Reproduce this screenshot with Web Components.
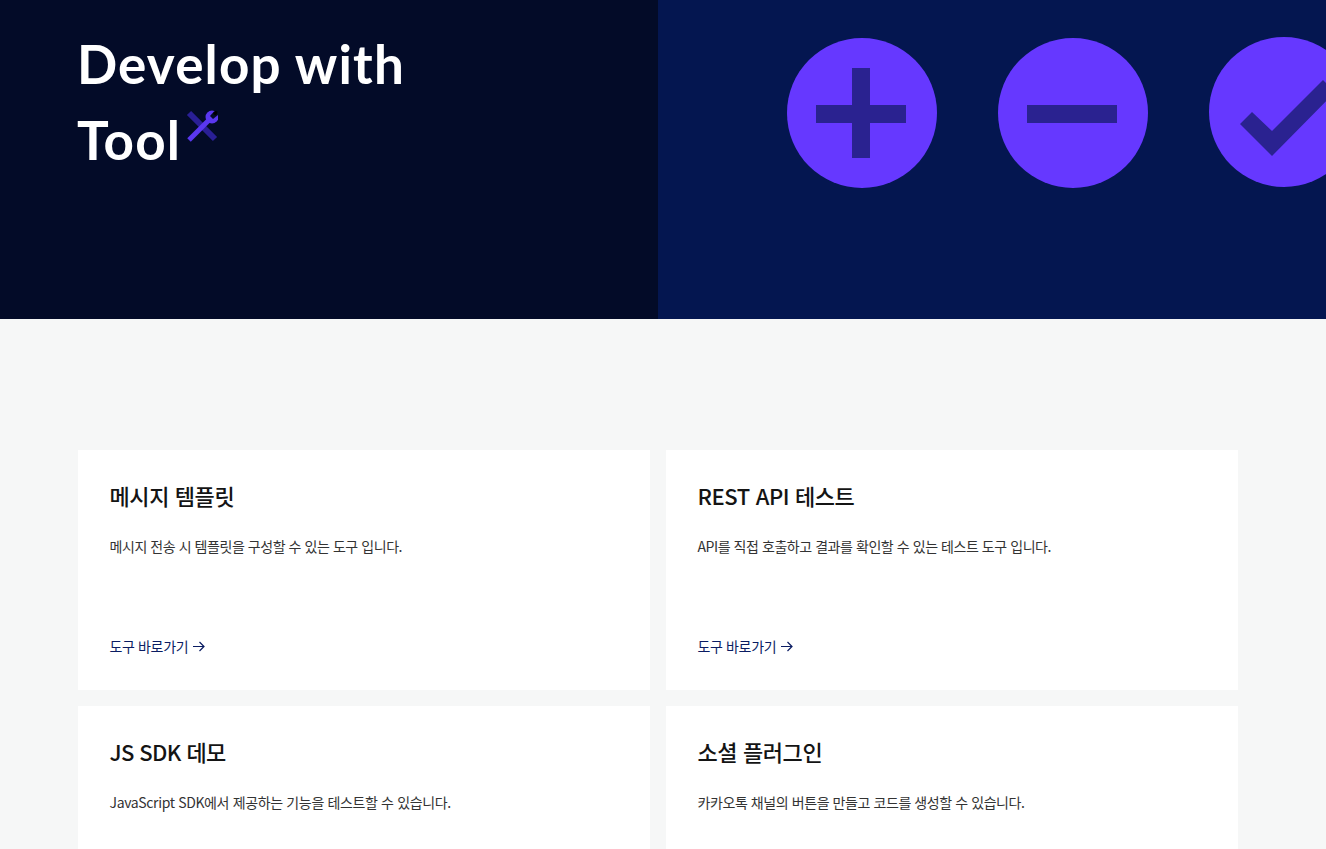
<!DOCTYPE html>
<html lang="ko"><head><meta charset="utf-8"><title>Develop with Tool</title>
<style>
html,body{margin:0;padding:0;height:849px;overflow:hidden;background:#f6f7f7;font-family:"Noto Sans CJK KR","Noto Sans",sans-serif}
</style></head><body>
<tool-page>
<tool-hero></tool-hero>
<card-grid>
<tool-card heading="메시지 템플릿" desc="메시지 전송 시 템플릿을 구성할 수 있는 도구 입니다." link="도구 바로가기"></tool-card>
<tool-card heading="REST API 테스트" desc="API를 직접 호출하고 결과를 확인할 수 있는 테스트 도구 입니다." link="도구 바로가기"></tool-card>
<tool-card heading="JS SDK 데모" desc="JavaScript SDK에서 제공하는 기능을 테스트할 수 있습니다." style="--ds:-.36px;--hs:-.6px"></tool-card>
<tool-card heading="소셜 플러그인" desc="카카오톡 채널의 버튼을 만들고 코드를 생성할 수 있습니다." style="--ds:-.42px"></tool-card>
</card-grid>
</tool-page>
<script>
class ToolPage extends HTMLElement{constructor(){super();this.attachShadow({mode:'open'}).innerHTML=`<style>:host{display:block;height:849px;overflow:hidden}</style><slot></slot>`}}
class ToolHero extends HTMLElement{constructor(){super();this.attachShadow({mode:'open'}).innerHTML=`<style>
:host{display:flex;height:319px;overflow:hidden}
.l{flex:0 0 658px;background:#030b28;box-sizing:border-box;padding:26px 0 0 77px}
h1{margin:0;font:700 53px/76px Lato,sans-serif;color:#fff;letter-spacing:1.15px}
.tool{display:flex;align-items:flex-start}
.tool svg{margin:8px 0 0 5px;flex:none}
.r{flex:1;min-width:0;background:#041650;display:flex;gap:61px;padding:38px 0 0 129px;align-items:flex-start;overflow:hidden}
.r svg{flex:none}
.r svg:last-child{margin-top:-1px}
</style>
<div class="l"><h1>Develop with<div class="tool">Tool<svg width="32" height="32" viewBox="0 0 32 32"><path d="M3 3 29 29" stroke="#2a1f96" stroke-width="6" fill="none"/><path d="M3 30 23 10" stroke="#5a37f0" stroke-width="5" fill="none"/><circle cx="26" cy="7" r="6.500" fill="#5a37f0"/><path d="M24 6 28 1.500 32 1 32 5 27 9Z" fill="#030b28"/><path d="M27 3.500 29 1 31.500 1.500 31 4 29 5.500Z" fill="#000"/></svg></div></h1></div>
<div class="r">
<svg width="150" height="150" viewBox="0 0 150 150"><circle cx="75" cy="75" r="75" fill="#6638ff"/><path d="M65 30H83V67H119V85H83V120H65V85H29V67H65Z" fill="#2a2290"/></svg>
<svg width="150" height="150" viewBox="0 0 150 150"><circle cx="75" cy="75" r="75" fill="#6638ff"/><path d="M29 67H119V85H29Z" fill="#2a2290"/></svg>
<svg width="150" height="150" viewBox="0 0 150 150"><circle cx="75" cy="75" r="75" fill="#6638ff"/><path d="M31 87 43 75 63 94 114 43 126 55 63 119Z" fill="#2a2290"/></svg>
</div>`}}
class CardGrid extends HTMLElement{constructor(){super();this.attachShadow({mode:'open'}).innerHTML=`<style>:host{display:grid;grid-template-columns:572px 572px;gap:16px;padding:131px 0 0 78px}</style><slot></slot>`}}
class ToolCard extends HTMLElement{constructor(){super();const l=this.getAttribute('link');this.attachShadow({mode:'open'}).innerHTML=`<style>
:host{display:flex;flex-direction:column;box-sizing:border-box;height:240px;background:#fff;padding:28px 32px 33px 31.5px}
h2{margin:0;font:500 22px/34px "Noto Sans CJK KR",sans-serif;color:#141414;letter-spacing:var(--hs,-.4px)}
p{margin:23px 0 0;font:400 14px/22px "Noto Sans CJK KR",sans-serif;color:#333;letter-spacing:var(--ds,-.44px)}
a{margin-top:auto;display:flex;align-items:center;gap:5px;font:400 14px/22px "Noto Sans CJK KR",sans-serif;color:#0a1c62;letter-spacing:-.36px;text-decoration:none}
svg{display:block}
</style><h2>${this.getAttribute('heading')}</h2><p>${this.getAttribute('desc')}</p>${l?`<a href="#">${l}<svg width="12" height="11" viewBox="0 0 12 11" fill="none" stroke="#0a1c62" stroke-width="1.200"><path d="M0 5.500H11M6.500 1 11 5.500 6.500 10"/></svg></a>`:''}`}}
customElements.define('tool-page',ToolPage);
customElements.define('tool-hero',ToolHero);
customElements.define('card-grid',CardGrid);
customElements.define('tool-card',ToolCard);
</script></body></html>
